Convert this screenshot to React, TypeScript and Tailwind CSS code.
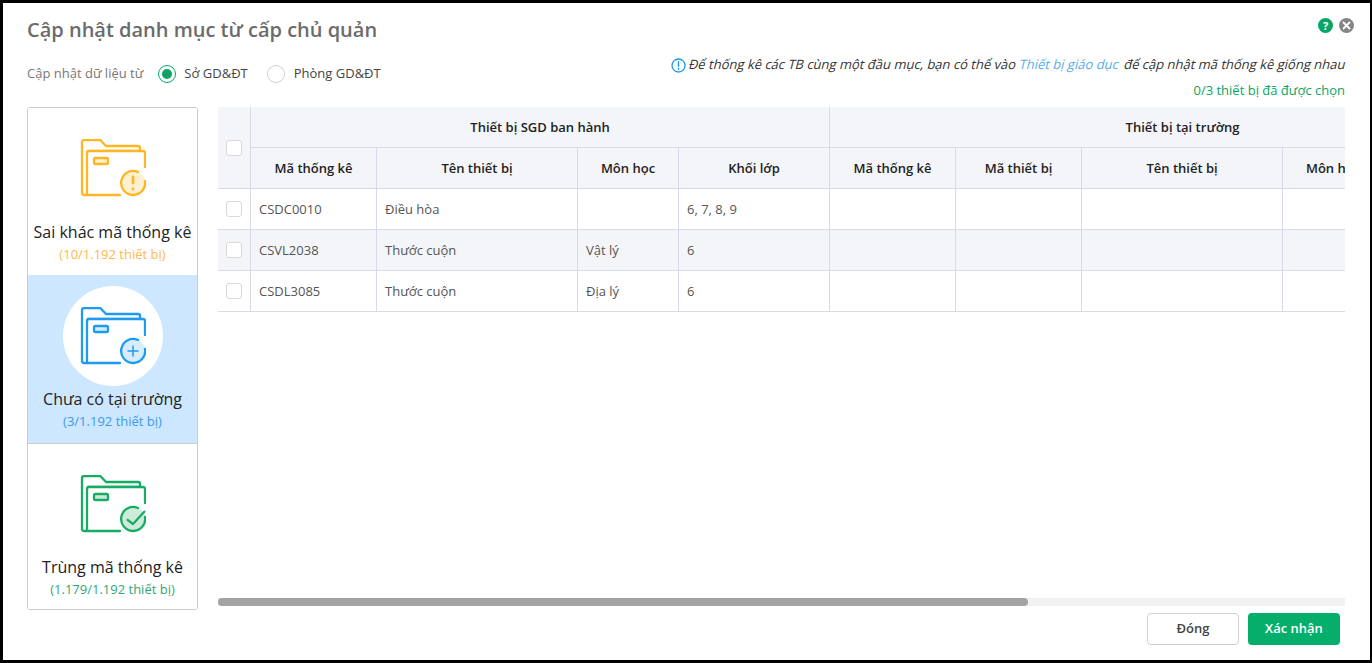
import type { ReactNode } from 'react'

const font = { fontFamily: '"Open Sans", sans-serif' }

function FolderIcon({ color, tint, children }: { color: string; tint: string; children: ReactNode }) {
  return (
    <svg width="66" height="58" viewBox="-1 0 66 58" fill="none" stroke={color} strokeWidth="2.300" strokeLinecap="round" strokeLinejoin="round">
      <path d="M6 10h52v3H6z" fill={tint} stroke="none" />
      <path d="M39 56H3a2 2 0 0 1-2-2V3a2 2 0 0 1 2-2h15.500a2 2 0 0 1 1.500.700L25 7h32a2 2 0 0 1 2 2v3" />
      <path d="M6 55V14a2 2 0 0 1 2-2h54a2 2 0 0 1 2 2v14" />
      <rect x="13" y="19" width="14" height="6" rx="1.500" fill={tint} />
      <circle cx="52" cy="44" r="12" fill={tint} stroke="none" />
      <path d="M57 33A12 12 0 1 0 64 42" />
      {children}
    </svg>
  )
}

function Checkbox() {
  return <span className="block w-4 h-4 rounded-[3px] border border-[#d9d9d9] bg-white mx-auto" />
}

function SideCard({ title, sub, subColor, icon, box, titleMt, active }: {
  title: string
  sub: string
  subColor: string
  icon: ReactNode
  box: string
  titleMt: string
  active?: boolean
}) {
  return (
    <div className={`flex flex-col items-center ${box}`}>
      {active ? (
        <div className="w-[100px] h-[100px] rounded-full bg-white flex items-center justify-center">{icon}</div>
      ) : (
        icon
      )}
      <div className={`text-base leading-[22px] text-[#222] ${titleMt}`}>{title}</div>
      <div className={`text-[13px] leading-[18px] mt-[2px] ${subColor}`}>{sub}</div>
    </div>
  )
}

const columns = [
  { title: 'Mã thống kê', w: 'w-[126px]' },
  { title: 'Tên thiết bị', w: 'w-[201px]' },
  { title: 'Môn học', w: 'w-[101px]' },
  { title: 'Khối lớp', w: 'w-[151px]' },
  { title: 'Mã thống kê', w: 'w-[126px]' },
  { title: 'Mã thiết bị', w: 'w-[126px]' },
  { title: 'Tên thiết bị', w: 'w-[201px]' },
  { title: 'Môn học', w: 'w-[101px]' },
  { title: 'Khối lớp', w: 'w-[151px]' },
]

const rows = [
  ['CSDC0010', 'Điều hòa', '', '6, 7, 8, 9'],
  ['CSVL2038', 'Thước cuộn', 'Vật lý', '6'],
  ['CSDL3085', 'Thước cuộn', 'Địa lý', '6'],
]

export default function App() {
  return (
    <div style={font} className="w-[1372px] h-[663px] bg-white border-[3px] border-r-2 border-black flex flex-col overflow-hidden relative">
      <div className="absolute right-[16px] top-[15px] flex items-center gap-[6px]">
        <span className="w-[15px] h-[15px] rounded-full bg-[#0aa565] text-white text-[11px] font-bold leading-[15px] text-center">?</span>
        <span className="w-[15px] h-[15px] rounded-full bg-[#858585] flex items-center justify-center">
          <svg width="9" height="9" viewBox="0 0 9 9" stroke="white" strokeWidth="1.800" strokeLinecap="round">
            <path d="M1.500 1.500l6 6M7.500 1.500l-6 6" />
          </svg>
        </span>
      </div>

      <div className="pl-[24px] pr-[25px] pt-[13px]">
        <h1 className="text-[20px] leading-[28px] font-semibold text-[#6b6b6b]">Cập nhật danh mục từ cấp chủ quản</h1>
        <div className="flex justify-between mt-[11px]">
          <div className="flex items-center h-[36px] pt-[2px] text-[13px]">
            <span className="text-[#777] mr-[15px]">Cập nhật dữ liệu từ</span>
            <span className="w-[18px] h-[18px] rounded-full border border-[#0aa565] flex items-center justify-center mr-[8px]">
              <span className="w-[10px] h-[10px] rounded-full bg-[#0aa565]" />
            </span>
            <span className="text-[#444] mr-[19px]">Sở GD&ĐT</span>
            <span className="w-[18px] h-[18px] rounded-full border border-[#d0d0d0] mr-[9px]" />
            <span className="text-[#444]">Phòng GD&ĐT</span>
          </div>
          <div className="flex flex-col items-end text-[13px]">
            <div className="flex items-center h-[20px] text-[#333] mr-[-1px]">
              <svg width="15" height="15" viewBox="0 0 15 15" fill="none" className="mr-[3px]" stroke="#1e96ee">
                <circle cx="7.500" cy="7.500" r="6.500" strokeWidth="1.300" />
                <path d="M7.500 3.800v4.500M7.500 10.200v1" strokeWidth="1.400" strokeLinecap="round" />
              </svg>
              <span className="inline-block -skew-x-[14deg]">Để thống kê các TB cùng một đầu mục, bạn có thể vào <span className="text-[#59ade8] mr-[2px]">Thiết bị giáo dục</span> để cập nhật mã thống kê giống nhau</span>
            </div>
            <div className="text-[#0aa565] leading-[18px] mt-[6px]">0/3 thiết bị đã được chọn</div>
          </div>
        </div>
      </div>

      <div className="flex-1 min-h-0 flex pl-[24px] pr-[25px] mt-[8px]">
        <div className="w-[171px] h-[503px] border border-[#cccccc] rounded-[3px] flex flex-col mr-[20px] overflow-hidden">
          <SideCard
            title="Sai khác mã thống kê"
            sub="(10/1.192 thiết bị)"
            subColor="text-[#ffb84d]"
            box="h-[167px] pt-[31px] bg-white"
            titleMt="mt-[24px]"
            icon={
              <FolderIcon color="#ffb524" tint="#fff0d0">
                <path d="M52 38v6" strokeWidth="2.800" />
                <path d="M52 49.500v.500" strokeWidth="2.500" />
              </FolderIcon>
            }
          />
          <SideCard
            title="Chưa có tại trường"
            sub="(3/1.192 thiết bị)"
            subColor="text-[#3b99ee]"
            active
            box="h-[168px] pt-[11px] bg-[#cce7ff]"
            titleMt="mt-[2px]"
            icon={
              <FolderIcon color="#1d9bf0" tint="#d8ecfb">
                <path d="M52 39v10M47 44h10" strokeWidth="1.500" />
              </FolderIcon>
            }
          />
          <SideCard
            title="Trùng mã thống kê"
            sub="(1.179/1.192 thiết bị)"
            subColor="text-[#2fa87a]"
            box="h-[166px] pt-[31px] bg-white border-t border-[#cccccc]"
            titleMt="mt-[23px]"
            icon={
              <FolderIcon color="#17ab63" tint="#cdeada">
                <path d="M46.700 45L52 49l11.300-12.300" />
              </FolderIcon>
            }
          />
        </div>

        <div className="flex-1 min-w-0 flex flex-col">
          <div className="flex-1 min-h-0 overflow-hidden">
            <table className="table-fixed border-separate border-spacing-0 w-[1317px] text-[13px] text-[#555]">
              <colgroup>
                <col className="w-[33px]" />
                {columns.map((c, i) => <col key={i} className={c.w} />)}
              </colgroup>
              <thead className="text-[#222]">
                <tr className="h-[41px] bg-[#f4f5f9]">
                  <th rowSpan={2} className="border-b border-r border-[#d8d9ea] font-normal"><Checkbox /></th>
                  <th colSpan={4} className="border-b border-r border-[#d8d9ea] font-semibold pt-[2px]">Thiết bị SGD ban hành</th>
                  <th colSpan={5} className="border-b border-[#d8d9ea] font-semibold pt-[2px]">Thiết bị tại trường</th>
                </tr>
                <tr className="h-[41px] bg-[#f4f5f9]">
                  {columns.map((c, i) => (
                    <th key={i} className="border-b border-r border-[#d8d9ea] font-semibold pt-[2px]">{c.title}</th>
                  ))}
                </tr>
              </thead>
              <tbody>
                {rows.map((r, i) => (
                  <tr key={r[0]} className={`h-[41px] ${i === 1 ? 'bg-[#f4f5f9]' : 'bg-white'}`}>
                    <td className="border-b border-r border-[#d8d9ea]"><Checkbox /></td>
                    {columns.map((_, j) => (
                      <td key={j} className="border-b border-r border-[#d8d9ea] px-[8px] pt-[2px]">{r[j] ?? ''}</td>
                    ))}
                  </tr>
                ))}
              </tbody>
            </table>
          </div>
          <div className="h-[8px] bg-[#f1f1f1] overflow-hidden">
            <div className="w-[810px] h-full bg-[#a3a3a3] rounded-[4px]" />
          </div>
          <div className="flex justify-end gap-[9px] pr-[5px] pt-[7px] pb-[15px] text-[13px]">
            <button className="w-[92px] h-[32px] rounded-[4px] border border-[#d0d0d0] bg-white text-[#444] font-semibold">Đóng</button>
            <button className="w-[92px] h-[32px] rounded-[4px] bg-[#06ae6b] text-white font-semibold">Xác nhận</button>
          </div>
        </div>
      </div>
    </div>
  )
}
